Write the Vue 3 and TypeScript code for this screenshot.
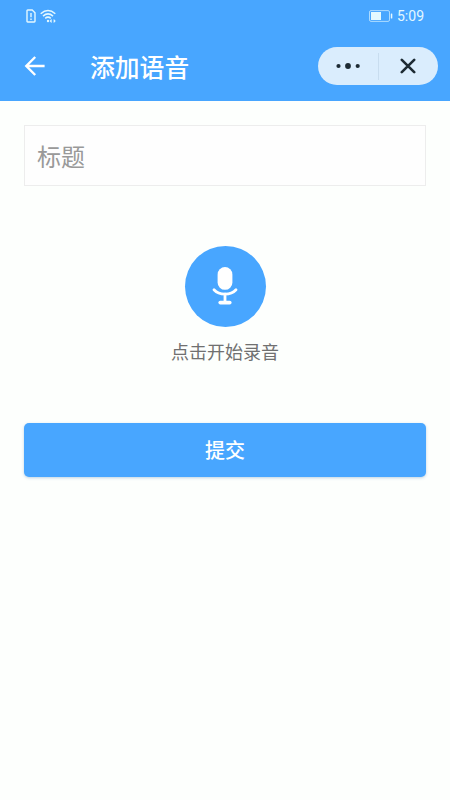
<script setup lang="ts">
import { ref } from 'vue'

const title = ref<string>('')
const recording = ref<boolean>(false)

function toggleRecording(): void {
  recording.value = !recording.value
}
</script>

<template>
  <div class="page">
    <header class="header">
      <div class="status-bar">
        <div class="status-left">
          <svg class="sim-icon" viewBox="0 0 10 14" fill="none" stroke="currentColor" stroke-width="1.4">
            <path d="M1 1.7Q1 1 1.7 1H6.2L9 3.8V12.3Q9 13 8.3 13H1.7Q1 13 1 12.3Z" />
            <path d="M5 4V8.2M5 9.6V11" />
          </svg>
          <svg class="wifi-icon" viewBox="0 0 16 14" fill="none" stroke="currentColor" stroke-width="1.5">
            <path d="M.7 4.7Q8-1.8 15.3 4.7" />
            <path d="M3 7.1Q8 2.7 13 7.1" />
            <path d="M5.2 9.4Q8 6.9 10.8 9.4" />
            <circle cx="8" cy="12" r="1.2" fill="currentColor" stroke="none" />
            <path d="M11.7 10.7L10.4 12L11.7 13.3M13.6 10.7L14.9 12L13.6 13.3" stroke-width="1.2" />
          </svg>
        </div>
        <div class="status-right">
          <svg class="battery-icon" viewBox="0 0 25 12">
            <rect x="1.5" y=".6" width="20" height="10.8" rx="1.5" fill="none" stroke="currentColor" stroke-opacity=".65" />
            <rect x="3" y="2" width="10" height="8" fill="currentColor" />
            <rect x="22.8" y="3.5" width="1.5" height="5" rx=".6" fill="currentColor" />
          </svg>
          <span class="time">5:09</span>
        </div>
      </div>
      <div class="nav-bar">
        <button class="back" type="button" aria-label="返回">
          <svg viewBox="0 0 22 22" fill="none" stroke="currentColor" stroke-width="2.4">
            <path d="M20.6 11H2.8M11.2 2L2.3 11L11.2 20" />
          </svg>
        </button>
        <h1 class="heading">添加语音</h1>
        <div class="capsule">
          <button class="capsule-button" type="button" aria-label="更多">
            <svg class="dots" viewBox="0 0 24 6" fill="currentColor">
              <circle cx="2.5" cy="3" r="2.1" />
              <circle cx="12" cy="3" r="2.9" />
              <circle cx="21.7" cy="3" r="2.1" />
            </svg>
          </button>
          <span class="divider"></span>
          <button class="capsule-button" type="button" aria-label="关闭">
            <svg class="close" viewBox="0 0 16 16" fill="none" stroke="currentColor" stroke-width="2.6" stroke-linecap="round">
              <path d="M1.8 1.8L14.2 14.2M14.2 1.8L1.8 14.2" />
            </svg>
          </button>
        </div>
      </div>
    </header>

    <main class="content">
      <input v-model="title" class="title-input" type="text" placeholder="标题" />
      <section class="recorder">
        <button class="mic-button" type="button" aria-label="录音" :aria-pressed="recording" @click="toggleRecording">
          <svg class="mic" viewBox="0 0 26 38">
            <rect x="5.6" y="0" width="14.8" height="22.8" rx="7.4" fill="currentColor" />
            <path d="M2 22.8C7.2 28.6 18.8 28.6 24 22.8M13 27V35.5" fill="none" stroke="currentColor" stroke-width="2.8" stroke-linecap="round" />
            <path d="M8.3 35.6H17.7" fill="none" stroke="currentColor" stroke-width="3.8" stroke-linecap="round" />
          </svg>
        </button>
        <p class="hint">点击开始录音</p>
      </section>
      <button class="submit" type="button">提交</button>
    </main>
  </div>
</template>

<style>
body {
  background: #fdfffd;
}
</style>

<style scoped>
.page {
  box-sizing: border-box;
  min-height: 800px;
  background: #fdfffd;
  font-family: "Noto Sans CJK SC", sans-serif;
}

button {
  padding: 0;
  border: 0;
  background: none;
  color: inherit;
  font: inherit;
}

svg {
  display: block;
}

.header {
  height: 101px;
  background: #48a6ff;
  color: #fff;
}

.status-bar {
  display: flex;
  align-items: center;
  justify-content: space-between;
  height: 32px;
  padding: 0 26px;
  box-sizing: border-box;
  color: #e3f8ff;
}

.status-left,
.status-right {
  display: flex;
  align-items: center;
}

.status-left {
  gap: 4px;
}

.status-right {
  gap: 4px;
}

.sim-icon {
  width: 10px;
  height: 14px;
}

.wifi-icon {
  width: 16px;
  height: 14px;
}

.battery-icon {
  width: 25px;
  height: 12px;
}

.time {
  font: 14px/32px Roboto, sans-serif;
}

.nav-bar {
  display: flex;
  align-items: center;
  height: 68px;
  padding: 0 12px 0 24px;
}

.back svg {
  width: 22px;
  height: 22px;
}

.heading {
  flex: 1;
  margin: 0 0 0 44px;
  font-size: 24.8px;
  font-weight: 500;
  line-height: 36px;
}

.capsule {
  display: flex;
  align-items: center;
  width: 120px;
  height: 38px;
  border-radius: 19px;
  background: #daedfd;
  color: #1d2b34;
}

.capsule-button {
  display: flex;
  flex: 1;
  align-items: center;
  justify-content: center;
  height: 100%;
}

.divider {
  width: 1px;
  height: 27px;
  background: #c8ddef;
}

.dots {
  width: 24px;
  height: 6px;
}

.close {
  width: 16px;
  height: 16px;
}

.content {
  display: flex;
  flex-direction: column;
  padding: 24px 24px 0;
}

.title-input {
  box-sizing: border-box;
  width: 100%;
  height: 60.5px;
  padding: 0 12px;
  border: 1px solid #ededed;
  border-radius: 0;
  outline: 0;
  background: #fefefe;
  color: #333;
  font: 24px "Noto Sans CJK SC", sans-serif;
}

.title-input::placeholder {
  color: #999;
  opacity: 1;
}

.recorder {
  display: flex;
  flex-direction: column;
  align-items: center;
  margin-top: 60px;
}

.mic-button {
  display: flex;
  align-items: center;
  justify-content: center;
  width: 81px;
  height: 81px;
  border-radius: 50%;
  background: #48a6ff;
  color: #fff;
}

.mic {
  width: 26px;
  height: 38px;
}

.hint {
  margin: 10px 0 0;
  color: #707070;
  font-size: 18px;
  line-height: 28px;
}

.submit {
  height: 54px;
  margin-top: 58px;
  border-radius: 5px;
  background: #48a6ff;
  box-shadow: 0 1px 3px rgba(72, 130, 180, 0.35);
  color: #fff;
  font-size: 20px;
  font-weight: 500;
}
</style>
